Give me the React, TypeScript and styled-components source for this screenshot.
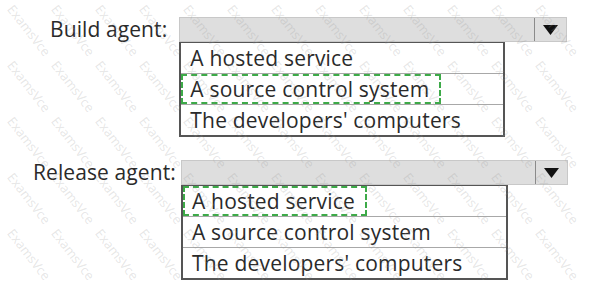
import React from "react";
import styled, { createGlobalStyle } from "styled-components";

const Global = createGlobalStyle`
  html, body { margin: 0; padding: 0; background: #ffffff; }
  body { width: 595px; height: 284px; overflow: hidden; font-family: "Open Sans", "Noto Sans", sans-serif; }
`;

const Page = styled.div`
  position: relative;
  width: 595px;
  height: 284px;
  padding-top: 17px;
  box-sizing: border-box;
  display: flex;
  flex-direction: column;
  gap: 23px;
  overflow: hidden;
`;

const Section = styled.div<{ $indent: number; $gap: number }>`
  display: flex;
  align-items: flex-start;
  padding-left: ${(p) => p.$indent}px;
  gap: ${(p) => p.$gap}px;
  position: relative;
  z-index: 1;
`;

const Label = styled.div`
  height: 25px;
  line-height: 25px;
  font-size: 21px;
  color: #2a2a2a;
  white-space: nowrap;
  letter-spacing: 0.1px;
`;

const Control = styled.div`
  display: flex;
  flex-direction: column;
`;

const Bar = styled.div<{ $width: number }>`
  width: ${(p) => p.$width}px;
  height: 25px;
  box-sizing: border-box;
  background: #dedede;
  border: 1px solid #c8c8c8;
  display: flex;
  justify-content: flex-end;
`;

const ArrowBox = styled.div`
  width: 31px;
  height: 100%;
  border-left: 1px solid #8a8a8a;
  display: flex;
  align-items: center;
  justify-content: center;
`;

const List = styled.div<{ $width: number }>`
  width: ${(p) => p.$width}px;
  box-sizing: border-box;
  border: 2px solid #555555;
  border-top: 1px solid #555555;
  background: #ffffff;
  display: flex;
  flex-direction: column;
`;

const Option = styled.div<{ $last?: boolean }>`
  height: ${(p) => (p.$last ? 30 : 31)}px;
  box-sizing: border-box;
  border-bottom: ${(p) => (p.$last ? "none" : "1px solid #a8a8a8")};
  display: flex;
  align-items: stretch;
`;

const OptionText = styled.span<{ $selected?: boolean }>`
  display: flex;
  align-items: center;
  box-sizing: border-box;
  font-size: 21px;
  color: #2a2a2a;
  white-space: nowrap;
  letter-spacing: 0.2px;
  padding: 0 10px 0 7px;
  border: 2px dashed ${(p) => (p.$selected ? "#3daa48" : "transparent")};
`;

const Watermarks = styled.div`
  position: absolute;
  inset: 0;
  pointer-events: none;
  z-index: 2;
`;

const Mark = styled.span`
  position: absolute;
  font-family: "Open Sans", sans-serif;
  font-size: 13px;
  line-height: 14px;
  color: rgba(150, 150, 150, 0.24);
  transform: rotate(52deg);
  transform-origin: left top;
  white-space: nowrap;
`;

const options = ["A hosted service", "A source control system", "The developers' computers"];

function Arrow() {
  return (
    <svg width="15" height="10" viewBox="0 0 15 10">
      <polygon points="0,0 15,0 7.5,10" fill="#111" />
    </svg>
  );
}

function Dropdown({ barWidth, listWidth, selected }: { barWidth: number; listWidth: number; selected: number }) {
  return (
    <Control>
      <Bar $width={barWidth}>
        <ArrowBox>
          <Arrow />
        </ArrowBox>
      </Bar>
      <List $width={listWidth}>
        {options.map((o, i) => (
          <Option key={o} $last={i === options.length - 1}>
            <OptionText $selected={i === selected}>{o}</OptionText>
          </Option>
        ))}
      </List>
    </Control>
  );
}

export default function App() {
  const marks: { x: number; y: number }[] = [];
  for (let y = 2; y <= 226; y += 56) {
    for (let x = 16; x <= 545; x += 44) {
      marks.push({ x, y });
    }
  }
  return (
    <>
      <Global />
      <Page>
        <Section $indent={50} $gap={12}>
          <Label>Build agent:</Label>
          <Dropdown barWidth={388} listWidth={326} selected={1} />
        </Section>
        <Section $indent={33} $gap={5}>
          <Label>Release agent:</Label>
          <Dropdown barWidth={387} listWidth={327} selected={0} />
        </Section>
        <Watermarks>
          {marks.map((m, i) => (
            <Mark key={i} style={{ left: m.x, top: m.y }}>
              ExamsVce
            </Mark>
          ))}
        </Watermarks>
      </Page>
    </>
  );
}
